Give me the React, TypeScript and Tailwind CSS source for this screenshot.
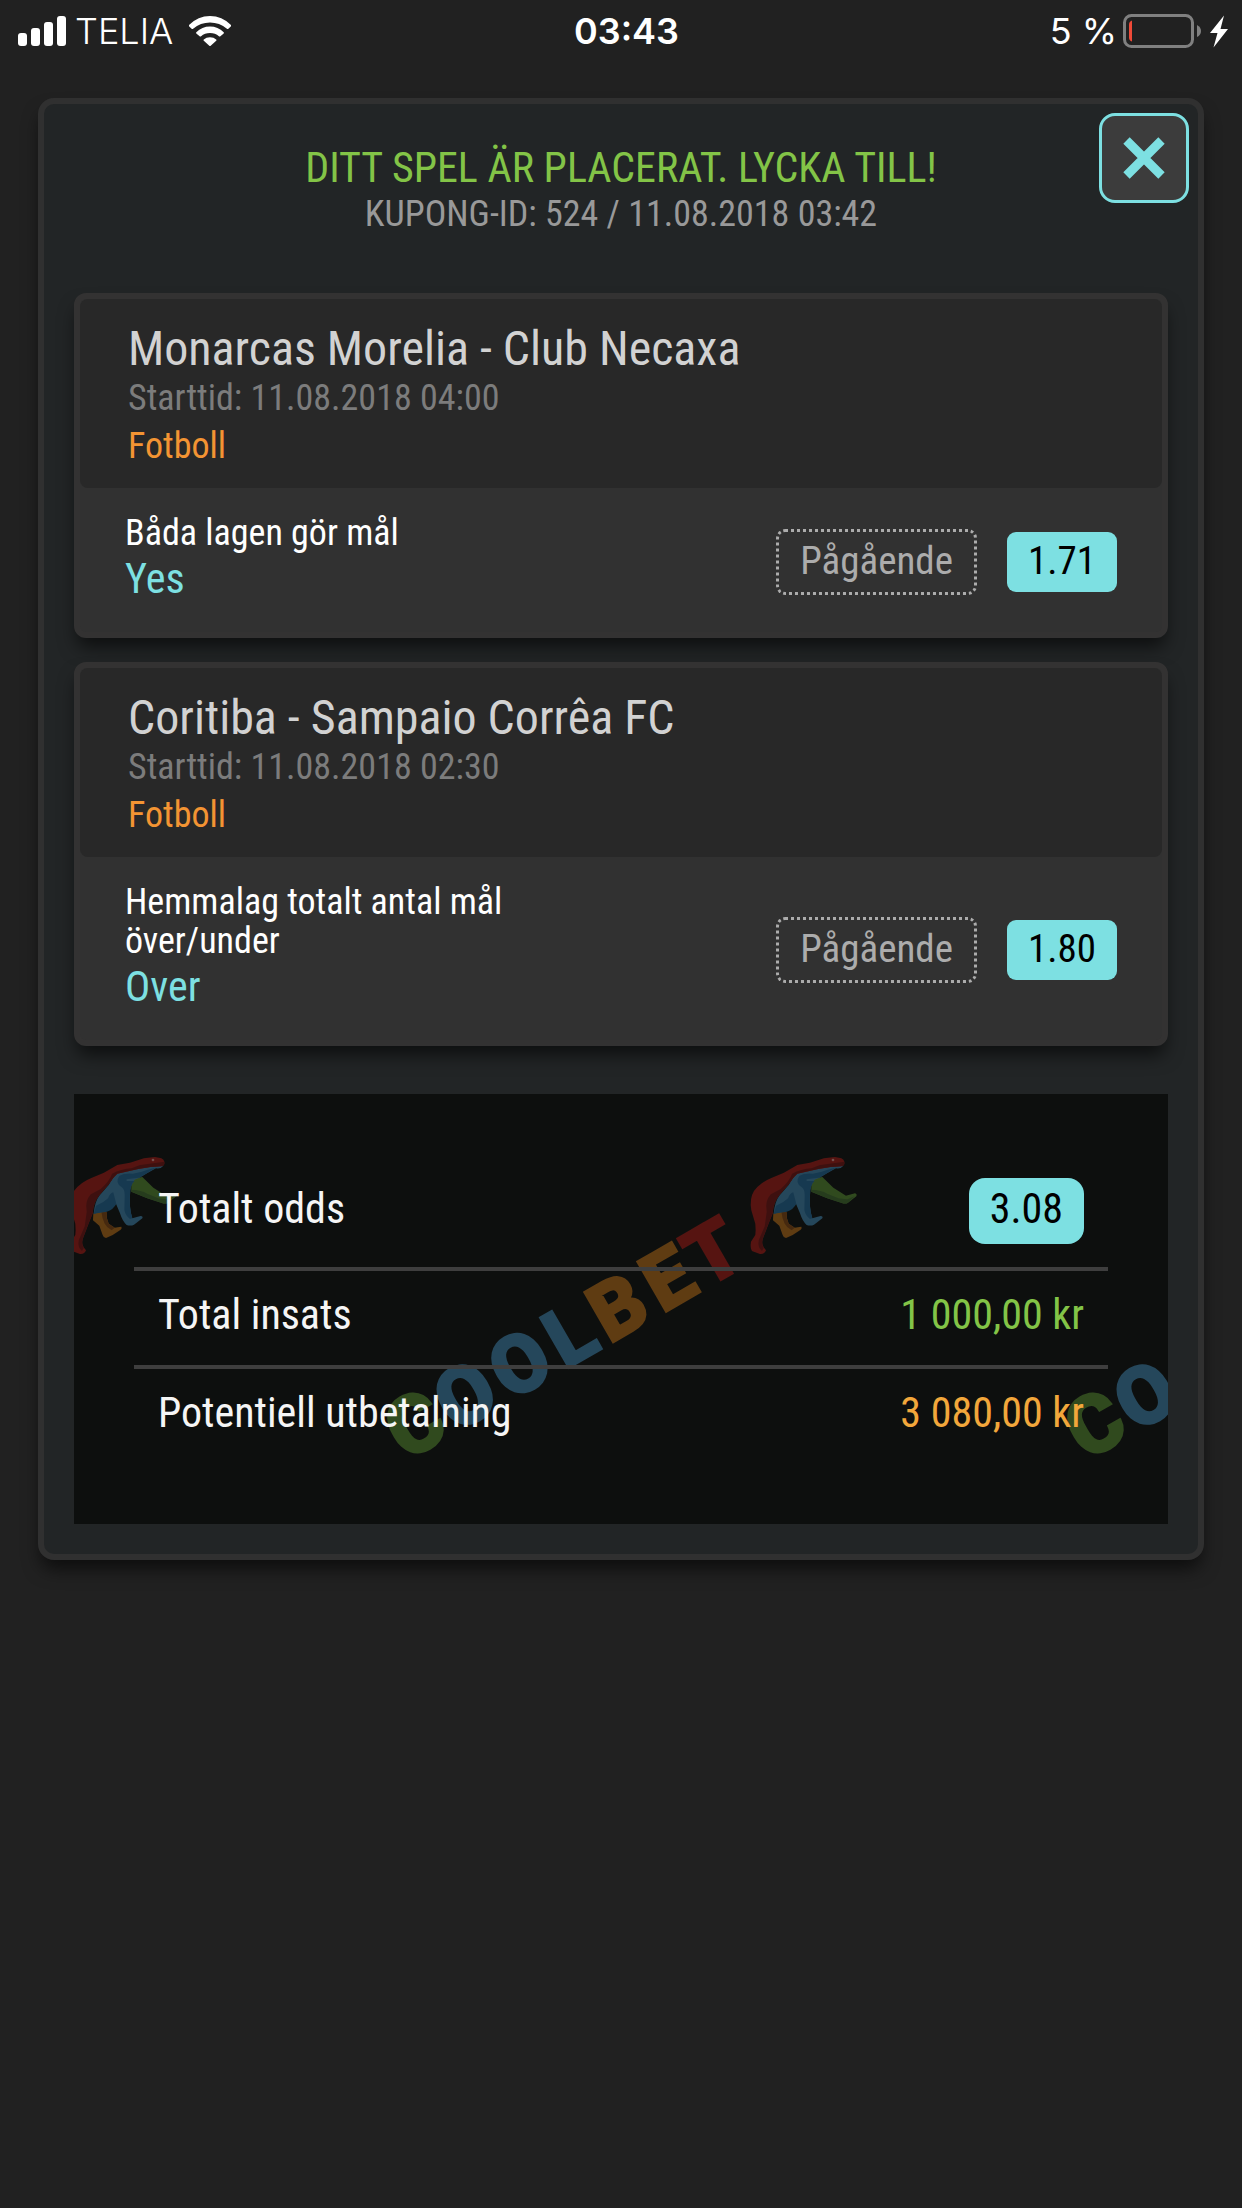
import React from 'react';

type Bet = {
  match: string;
  start: string;
  sport: string;
  market: string;
  pick: string;
  status: string;
  odds: string;
};

const bets: Bet[] = [
  {
    match: 'Monarcas Morelia - Club Necaxa',
    start: '11.08.2018 04:00',
    sport: 'Fotboll',
    market: 'Båda lagen gör mål',
    pick: 'Yes',
    status: 'Pågående',
    odds: '1.71'
  },
  {
    match: 'Coritiba - Sampaio Corrêa FC',
    start: '11.08.2018 02:30',
    sport: 'Fotboll',
    market: 'Hemmalag totalt antal mål över/under',
    pick: 'Over',
    status: 'Pågående',
    odds: '1.80'
  }
];

// Wordmark letters, x is the centre of each one along the slanted baseline
const wordmark = [
  { char: 'C', x: -58, color: '#304a1e' },
  { char: 'O', x: 0, color: '#25475b' },
  { char: 'O', x: 63, color: '#25475b' },
  { char: 'L', x: 121, color: '#25475b' },
  { char: 'B', x: 176, color: '#5f3c12' },
  { char: 'E', x: 234, color: '#5f3c12' },
  { char: 'T', x: 286, color: '#561411' }
];

function StatusBar() {
  return (
    <header className="grid h-[62px] grid-cols-3 items-center pl-[18px] pr-[13px] font-['Inter',sans-serif] text-[36px] leading-[44px] text-white">
      <div className="flex items-center">
        <svg className="h-[30px] w-[48px]" viewBox="0 0 48 30" fill="currentColor">
          <rect x="0" y="17" width="9" height="13" rx="3" />
          <rect x="13" y="12" width="9" height="18" rx="3" />
          <rect x="26" y="6" width="9" height="24" rx="3" />
          <rect x="39" y="0" width="9" height="30" rx="3" />
        </svg>
        <span className="ml-[9px] font-light">TELIA</span>
        <svg className="ml-4 h-[30px] w-[42px]" viewBox="0 0 42 30" fill="currentColor">
          <path d="M0 9Q9 0 21 0t21 9q.5.6 0 1.200l-2.600 2.600q-.8.600-1.500 0Q30.500 6.500 21 6.500T4.100 12.800q-.7.600-1.500 0L0 10.200Q-.5 9.600 0 9Z" />
          <path d="M7.300 16.300Q13 10.600 21 10.600t13.700 5.700q.5.600 0 1.200L31.400 20.300q-.8.600-1.500 0Q26.300 17 21 17t-8.900 3.300q-.7.600-1.500 0L7.300 17.500q-.5-.6 0-1.200Z" />
          <path d="M14.800 23.600Q17.200 21.200 21 21.200t6.200 2.400q.6.600 0 1.200L21.700 29.700q-.7.600-1.400 0L14.800 24.800q-.6-.6 0-1.200Z" />
        </svg>
      </div>
      <div className="pl-1.5 text-center font-semibold">03:43</div>
      <div className="flex items-center justify-end">
        <span>5 %</span>
        <svg className="ml-1.5 h-[34px] w-[106px]" viewBox="0 0 106 34">
          <rect x="1.500" y="1.500" width="68" height="31" rx="7" fill="none" stroke="#808080" strokeWidth="3" />
          <path d="M9 6.500v21q-3-1-3-4v-13q0-3 3-4Z" fill="#f04a38" />
          <path d="M74 11q4 2 4 6t-4 6Z" fill="#808080" />
          <path d="M101 1.500 87 19h7.500L90.500 33.500 105 15h-7.500Z" fill="#fff" />
        </svg>
      </div>
    </header>
  );
}

function Bear() {
  return (
    <g>
      <path fill="#5f3c12" d="M100 206 124 200 140 202Q138 220 146 236L164 248 184 245Q187 250 182 254L158 270 138 279Q130 277 128 270L118 242 99 226Z" />
      <path fill="#46290f" d="M124 200 140 202Q138 220 146 236L164 248 155 256Q140 248 134 236Q126 220 124 200Z" />
      <path fill="#304a1e" d="M200 104 247 96 280 128 318 152 345 145Q352 147 349 154L324 173Q316 178 306 174L262 160 214 140 214 112Z" />
      <path fill="#263c1d" d="M214 134Q245 135 262 146L296 160 322 163 345 153 324 173Q316 178 306 174L262 160 214 140Z" />
      <path fill="#25475b" d="M310 62Q303 72 288 70L262 84 238 98 224 104Q210 118 210 150Q207 190 217 220L242 213Q250 214 247 220L222 239Q212 244 200 240Q188 230 180 205L168 176 140 198 101 206Q104 170 118 152L146 120 168 84 240 68Z" />
      <path fill="#163950" d="M288 68Q262 72 245 80L218 86Q192 84 178 92Q164 112 184 126Q194 132 194 150L193 195Q196 212 210 222L217 220Q207 190 210 150Q210 118 224 108L200 108V103L238 98 262 84Z" />
      <path fill="#163950" d="M101 206 140 200Q160 194 169 176L160 142Q150 144 144 160Q130 174 108 182Z" />
      <path fill="#561411" d="M313 50Q315 62 304 64L272 66 235 72Q200 80 172 86Q158 98 146 118L118 150Q100 172 98 205L84 240 68 282Q64 298 72 308L78 316Q74 328 60 327L36 318Q30 308 33 290L46 270Q48 256 46 236L34 196Q28 160 42 138Q60 112 96 98L132 83 172 60 210 53 252 40 285 36 304 40Q312 44 313 50Z" />
      <path fill="#3e100f" d="M313 50Q315 62 304 64L272 66 235 72Q200 80 172 86Q158 98 146 118L118 150Q100 172 98 205L84 240 68 282Q64 298 72 308L66 318Q52 308 56 286L74 244 80 200Q74 168 92 148L122 132Q150 106 156 86Q182 72 214 70L240 60 278 55Z" />
      <circle cx="279" cy="45" r="4" fill="#74504e" />
    </g>
  );
}

function Watermark() {
  return (
    <svg className="absolute inset-0 h-full w-full" aria-hidden="true">
      <defs>
        <pattern id="watermark" x="200" y="0" width="680" height="430" patternUnits="userSpaceOnUse">
          <g
            transform="translate(191 301) rotate(-30)"
            fontFamily="Roboto, sans-serif"
            fontSize="80"
            fontWeight="800"
            textAnchor="middle"
            strokeWidth="3"
          >
            {wordmark.map((letter, index) => (
              <text key={index} x={letter.x} y="28" fill={letter.color} stroke={letter.color}>
                {letter.char}
              </text>
            ))}
          </g>
          <g transform="translate(466 51) scale(.3333)">
            <Bear />
          </g>
        </pattern>
      </defs>
      <rect width="100%" height="100%" fill="url(#watermark)" />
    </svg>
  );
}

function BetCard({ bet }: { bet: Bet }) {
  return (
    <article className="rounded-xl border-[6px] border-[#333232] bg-[#313131] shadow-[0_12px_18px_-3px_rgba(0,0,0,0.6)]">
      <div className="rounded-lg bg-[#282828] px-12 pb-[18px] pt-[25px]">
        <h2 className="text-[48px] leading-[50px] text-[#d2d2d2]">{bet.match}</h2>
        <p className="text-[36px] leading-[48px] text-[#7c7c7c]">Starttid: {bet.start}</p>
        <p className="text-[36px] leading-[48px] text-[#f39433]">{bet.sport}</p>
      </div>
      <div className="flex items-center justify-between px-[45px] pb-[27px] pt-[26px]">
        <div className="max-w-[420px]">
          <p className="text-[36px] leading-[39px] text-white">{bet.market}</p>
          <p className="text-[42px] leading-[52px] text-[#7de0e2]">{bet.pick}</p>
        </div>
        <div className="mt-1 flex items-center gap-[30px] text-[39px] leading-[50px]">
          <span className="rounded-[9px] border-[3px] border-dotted border-[#acacac] px-[21px] pb-[6px] pt-[4px] text-[#acacac]">
            {bet.status}
          </span>
          <span className="rounded-[9px] bg-[#7de0e2] px-[21px] pb-[6px] pt-[4px] text-black">{bet.odds}</span>
        </div>
      </div>
    </article>
  );
}

function App() {
  return (
    <div className="min-h-screen bg-[#212121] pb-12 font-['Roboto_Condensed',Roboto,sans-serif]">
      <StatusBar />

      <main className="relative mx-[38px] mt-9 rounded-2xl border-[6px] border-[#303030] bg-[#222526] px-[30px] pb-[30px] pt-[38px] shadow-[0_12px_18px_-3px_rgba(0,0,0,0.6)]">
        <button
          type="button"
          aria-label="Stäng"
          className="absolute right-[9px] top-[9px] flex h-[90px] w-[90px] items-center justify-center rounded-2xl border-[3px] border-[#7de0e2] bg-[#3c3c3c]"
        >
          <svg className="h-[42px] w-[42px]" viewBox="0 0 42 42" stroke="#7de0e2" strokeWidth="9">
            <path d="M3.500 3.500 38.500 38.500M38.500 3.500 3.500 38.500" />
          </svg>
        </button>

        <div className="mb-[57px] text-center">
          <h1 className="text-[42px] leading-[51px] text-[#83c447]">DITT SPEL ÄR PLACERAT. LYCKA TILL!</h1>
          <p className="text-[36px] leading-[43px] text-[#999]">KUPONG-ID: 524 / 11.08.2018 03:42</p>
        </div>

        <div className="flex flex-col gap-6">
          {bets.map((bet) => (
            <BetCard key={bet.match} bet={bet} />
          ))}
        </div>

        {/* Totals */}
        <section className="relative mt-12 bg-[#0d0f0e] px-[60px] py-[61px] text-[42px] leading-[50px]">
          <Watermark />
          <dl className="relative divide-y-4 divide-[#3e3e3e]">
            <div className="flex items-baseline justify-between px-6 py-[23px]">
              <dt className="text-[#f5f5f5]">Totalt odds</dt>
              <dd className="rounded-2xl bg-[#7de0e2] px-[21px] pb-[10px] pt-[6px] text-black">3.08</dd>
            </div>
            <div className="flex justify-between px-6 pb-[25px] pt-[19px]">
              <dt className="text-[#f5f5f5]">Total insats</dt>
              <dd className="text-[#83c447]">1 000,00 kr</dd>
            </div>
            <div className="flex justify-between px-6 pb-[25px] pt-[19px]">
              <dt className="text-[#f5f5f5]">Potentiell utbetalning</dt>
              <dd className="text-[#f2a73b]">3 080,00 kr</dd>
            </div>
          </dl>
        </section>
      </main>
    </div>
  );
}

export default App;
